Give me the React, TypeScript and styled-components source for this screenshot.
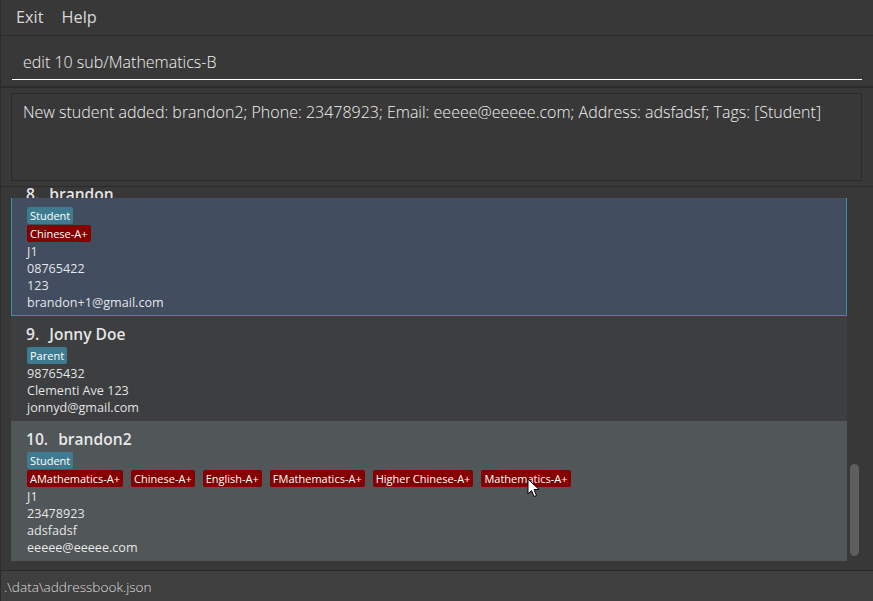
import React from "react";
import styled, { createGlobalStyle } from "styled-components";

const Global = createGlobalStyle`
  html, body { margin: 0; padding: 0; background: #383838; }
  body { font-family: "Open Sans", "Noto Sans", sans-serif; }
  * { box-sizing: border-box; }
`;

const Window = styled.div`
  position: relative;
  width: 873px;
  height: 601px;
  display: flex;
  flex-direction: column;
  background: #383838;
  overflow: hidden;
  border-left: 1px solid #2c2c2c;
`;

const MenuBar = styled.div`
  height: 36px;
  flex: none;
  display: flex;
  align-items: center;
  gap: 18px;
  padding: 0 0 1px 15px;
  border-bottom: 1px solid #2b2b2b;
  font-size: 16.3px;
  color: #d9d9d9;
`;

const MenuItem = styled.span`
  line-height: 20px;
`;

const CommandPane = styled.div`
  height: 52px;
  flex: none;
  padding: 8px 11px 0 11px;
  border-bottom: 2px solid #2b2b2b;
`;

const CommandField = styled.div`
  height: 36px;
  display: flex;
  align-items: center;
  padding-left: 11px;
  border-bottom: 1px solid #ffffff;
  font-size: 16px;
  font-weight: 300;
  color: #f2f2f2;
`;

const ResultPane = styled.div`
  height: 99px;
  flex: none;
  padding: 5px 11px 5px 10px;
  border-bottom: 1px solid #2b2b2b;
`;

const ResultBox = styled.div`
  height: 88px;
  border: 1px solid #2a2a2a;
  padding: 7px 11px;
  font-size: 16px;
  font-weight: 300;
  line-height: 22px;
  color: #f2f2f2;
  white-space: nowrap;
`;

const ListPane = styled.div`
  flex: 1;
  min-height: 0;
  padding: 1px 11px 9px 10px;
  border-bottom: 1px solid #2b2b2b;
  display: flex;
`;

const ListView = styled.div`
  flex: 1;
  display: flex;
  min-height: 0;
`;

const Cards = styled.div`
  flex: 1;
  min-width: 0;
  display: flex;
  flex-direction: column;
  overflow: hidden;
`;

const ScrollTrack = styled.div`
  width: 15px;
  flex: none;
  padding-left: 3px;
`;

const ScrollThumb = styled.div`
  width: 9px;
  border-radius: 5px;
  background: #5e5e5e;
`;

type Tone = "even" | "odd" | "selected";

const toneBg: Record<Tone, string> = {
  even: "#3c3e3f",
  odd: "#515658",
  selected: "#424d5f",
};

const Card = styled.div<{ $tone: Tone; $cut?: boolean }>`
  flex: none;
  background: ${(p) => toneBg[p.$tone]};
  border: 1px solid ${(p) => (p.$tone === "selected" ? "#3e8fa6" : "transparent")};
  border-top-width: ${(p) => (p.$cut ? 0 : 1)}px;
  padding: ${(p) => (p.$cut ? 9 : 4)}px 0 4px 15px;
  color: rgba(255, 255, 255, 0.88);
`;

const Title = styled.div`
  height: 26px;
  display: flex;
  align-items: center;
  gap: 10px;
  font-size: 15.6px;
  font-weight: 600;
  color: rgba(255, 255, 255, 0.88);
  margin-left: -1px;
`;

const CutTitle = styled(Title)`
  flex: none;
  height: 10px;
  align-items: flex-start;
  line-height: 20px;
  padding-left: 16px;

  & > span {
    margin-top: -4px;
  }
`;

const TagRow = styled.div`
  height: 18px;
  display: flex;
  gap: 8px;
  align-items: flex-start;
`;

const Tag = styled.span<{ $kind: "role" | "subject" }>`
  height: 17px;
  line-height: 17px;
  padding: 0 3px;
  border-radius: 2px;
  font-size: 11px;
  color: #ffffff;
  background: ${(p) => (p.$kind === "role" ? "#3e7b91" : "#850000")};
  white-space: nowrap;
`;

const Line = styled.div`
  height: 17px;
  line-height: 17px;
  font-size: 12.6px;
  white-space: nowrap;
`;

const StatusBar = styled.div`
  height: 30px;
  flex: none;
  display: flex;
  align-items: center;
  padding-left: 3px;
  background: #3f3f3f;
  font-size: 13.6px;
  font-weight: 300;
  color: #dedede;
`;

const Cursor = styled.svg`
  position: absolute;
  left: 526px;
  top: 478px;
  width: 13px;
  height: 20px;
  pointer-events: none;
`;

interface Person {
  index: number;
  name: string;
  role: string;
  subjects: string[];
  lines: string[];
  tone: Tone;
}

const people: Person[] = [
  {
    index: 9,
    name: "Jonny Doe",
    role: "Parent",
    subjects: [],
    lines: ["98765432", "Clementi Ave 123", "jonnyd@gmail.com"],
    tone: "even",
  },
  {
    index: 10,
    name: "brandon2",
    role: "Student",
    subjects: [
      "AMathematics-A+",
      "Chinese-A+",
      "English-A+",
      "FMathematics-A+",
      "Higher Chinese-A+",
      "Mathematics-A+",
    ],
    lines: ["J1", "23478923", "adsfadsf", "eeeee@eeeee.com"],
    tone: "odd",
  },
];

function PersonCard({ p }: { p: Person }) {
  return (
    <Card $tone={p.tone}>
      <Title>
        <span>{p.index}.</span>
        <span>{p.name}</span>
      </Title>
      <TagRow>
        <Tag $kind="role">{p.role}</Tag>
      </TagRow>
      {p.subjects.length > 0 && (
        <TagRow>
          {p.subjects.map((s) => (
            <Tag key={s} $kind="subject">
              {s}
            </Tag>
          ))}
        </TagRow>
      )}
      {p.lines.map((l) => (
        <Line key={l}>{l}</Line>
      ))}
    </Card>
  );
}

export default function App() {
  return (
    <>
      <Global />
      <Window>
        <MenuBar>
          <MenuItem>Exit</MenuItem>
          <MenuItem>Help</MenuItem>
        </MenuBar>
        <CommandPane>
          <CommandField>edit 10 sub/Mathematics-B</CommandField>
        </CommandPane>
        <ResultPane>
          <ResultBox>
            New student added: brandon2; Phone: 23478923; Email: eeeee@eeeee.com; Address: adsfadsf; Tags: [Student]
          </ResultBox>
        </ResultPane>
        <ListPane>
          <ListView>
            <Cards>
              <CutTitle>
                <span>8.</span>
                <span>brandon</span>
              </CutTitle>
              <Card $tone="selected" $cut>
                <TagRow>
                  <Tag $kind="role">Student</Tag>
                </TagRow>
                <TagRow>
                  <Tag $kind="subject">Chinese-A+</Tag>
                </TagRow>
                <Line>J1</Line>
                <Line>08765422</Line>
                <Line>123</Line>
                <Line>brandon+1@gmail.com</Line>
              </Card>
              {people.map((p) => (
                <PersonCard key={p.index} p={p} />
              ))}
            </Cards>
            <ScrollTrack>
              <ScrollThumb style={{ marginTop: 276, height: 92 }} />
            </ScrollTrack>
          </ListView>
        </ListPane>
        <StatusBar>.\data\addressbook.json</StatusBar>
        <Cursor viewBox="0 0 13 20">
          <path
            d="M1 1 L1 16 L4.5 12.5 L7 18.5 L9.5 17.5 L7 11.5 L12 11.5 Z"
            fill="#ffffff"
            stroke="#000000"
            strokeWidth="1"
            strokeLinejoin="round"
          />
        </Cursor>
      </Window>
    </>
  );
}
